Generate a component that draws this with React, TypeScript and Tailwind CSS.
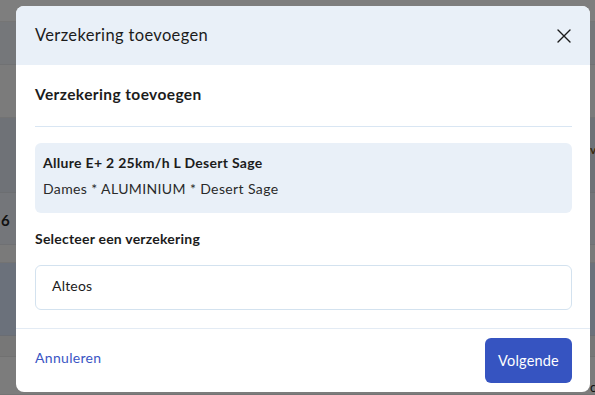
import React from "react";

const rows = [
  { h: 22, c: "bg-[#7e7e7e]" },
  { h: 43, c: "bg-[#75777a]" },
  { h: 53, c: "bg-[#7b7b7b]" },
  { h: 75, c: "bg-[#6f7277]" },
  { h: 52, c: "bg-[#74767a]" },
  { h: 18, c: "bg-[#7a7a7a]" },
  { h: 73, c: "bg-[#6b717b]" },
  { h: 21, c: "bg-[#777777]" },
  { h: 38, c: "bg-[#7c7c7c]" },
];

export default function App() {
  return (
    <div
      className="relative w-[595px] h-[395px] overflow-hidden bg-[#7e7e7e]"
      style={{ fontFamily: "Lato, 'Open Sans', sans-serif" }}
    >
      <div className="flex flex-col">
        {rows.map((r, i) => (
          <div key={i} className={`${r.c} border-b border-[#6a6a6a]/40`} style={{ height: r.h }} />
        ))}
      </div>
      <span className="absolute left-[1px] top-[209px] text-[15px] font-bold text-[#111]">6</span>
      <span className="absolute left-[590px] top-[141px] text-[12px] font-bold text-[#3a2a10]">v</span>
      <span className="absolute left-[590px] top-[378px] text-[13px] text-[#111]">c</span>

      <div className="absolute left-[16px] top-[6px] w-[574px] h-[386px] bg-white rounded-[8px] overflow-hidden flex flex-col">
        <div className="h-[59px] shrink-0 bg-[#e9f0f8] flex items-center justify-between pl-[19px] pr-[19px]">
          <span className="text-[16.5px] text-[#1c1c1c] tracking-[0.35px]">Verzekering toevoegen</span>
          <svg width="14" height="14" viewBox="0 0 14 14" className="mr-[0px]">
            <path d="M1 1 L13 13 M13 1 L1 13" stroke="#1a1a1a" strokeWidth="1.4" strokeLinecap="round" />
          </svg>
        </div>
        <div className="flex-1 pl-[19px] pr-[18px] pt-[19px]">
          <div className="text-[15.5px] font-bold text-[#1c1c1c] leading-[20px] tracking-[0.4px]">Verzekering toevoegen</div>
          <div className="mt-[22px] h-px bg-[#d9e6f3]" />
          <div className="mt-[16px] h-[70px] rounded-[6px] bg-[#e9f0f8] px-[8px] pt-[10px]">
            <div className="text-[14px] font-bold text-[#1c1c1c] leading-[20px] tracking-[0.3px]">Allure E+ 2 25km/h L Desert Sage</div>
            <div className="mt-[6px] text-[14px] text-[#2a2a2a] leading-[20px] tracking-[0.38px]">Dames * ALUMINIUM * Desert Sage</div>
          </div>
          <div className="mt-[16px] text-[14px] font-bold text-[#1c1c1c] leading-[20px] tracking-[0.22px]">Selecteer een verzekering</div>
          <div className="mt-[16px] h-[45px] rounded-[6px] border border-[#d3e2ef] flex items-center pl-[16px] pb-[4px] text-[14px] text-[#1c1c1c] tracking-[0.2px]">
            Alteos
          </div>
        </div>
        <div className="h-[64px] shrink-0 border-t border-[#e3ebf4] flex items-center justify-between pl-[19px] pr-[18px]">
          <span className="text-[14px] text-[#3a55c4] tracking-[0.32px] mb-[6px]">Annuleren</span>
          <button className="w-[87px] h-[45px] rounded-[6px] bg-[#3654c1] text-white text-[14.5px] tracking-[0.2px]">Volgende</button>
        </div>
      </div>
    </div>
  );
}
